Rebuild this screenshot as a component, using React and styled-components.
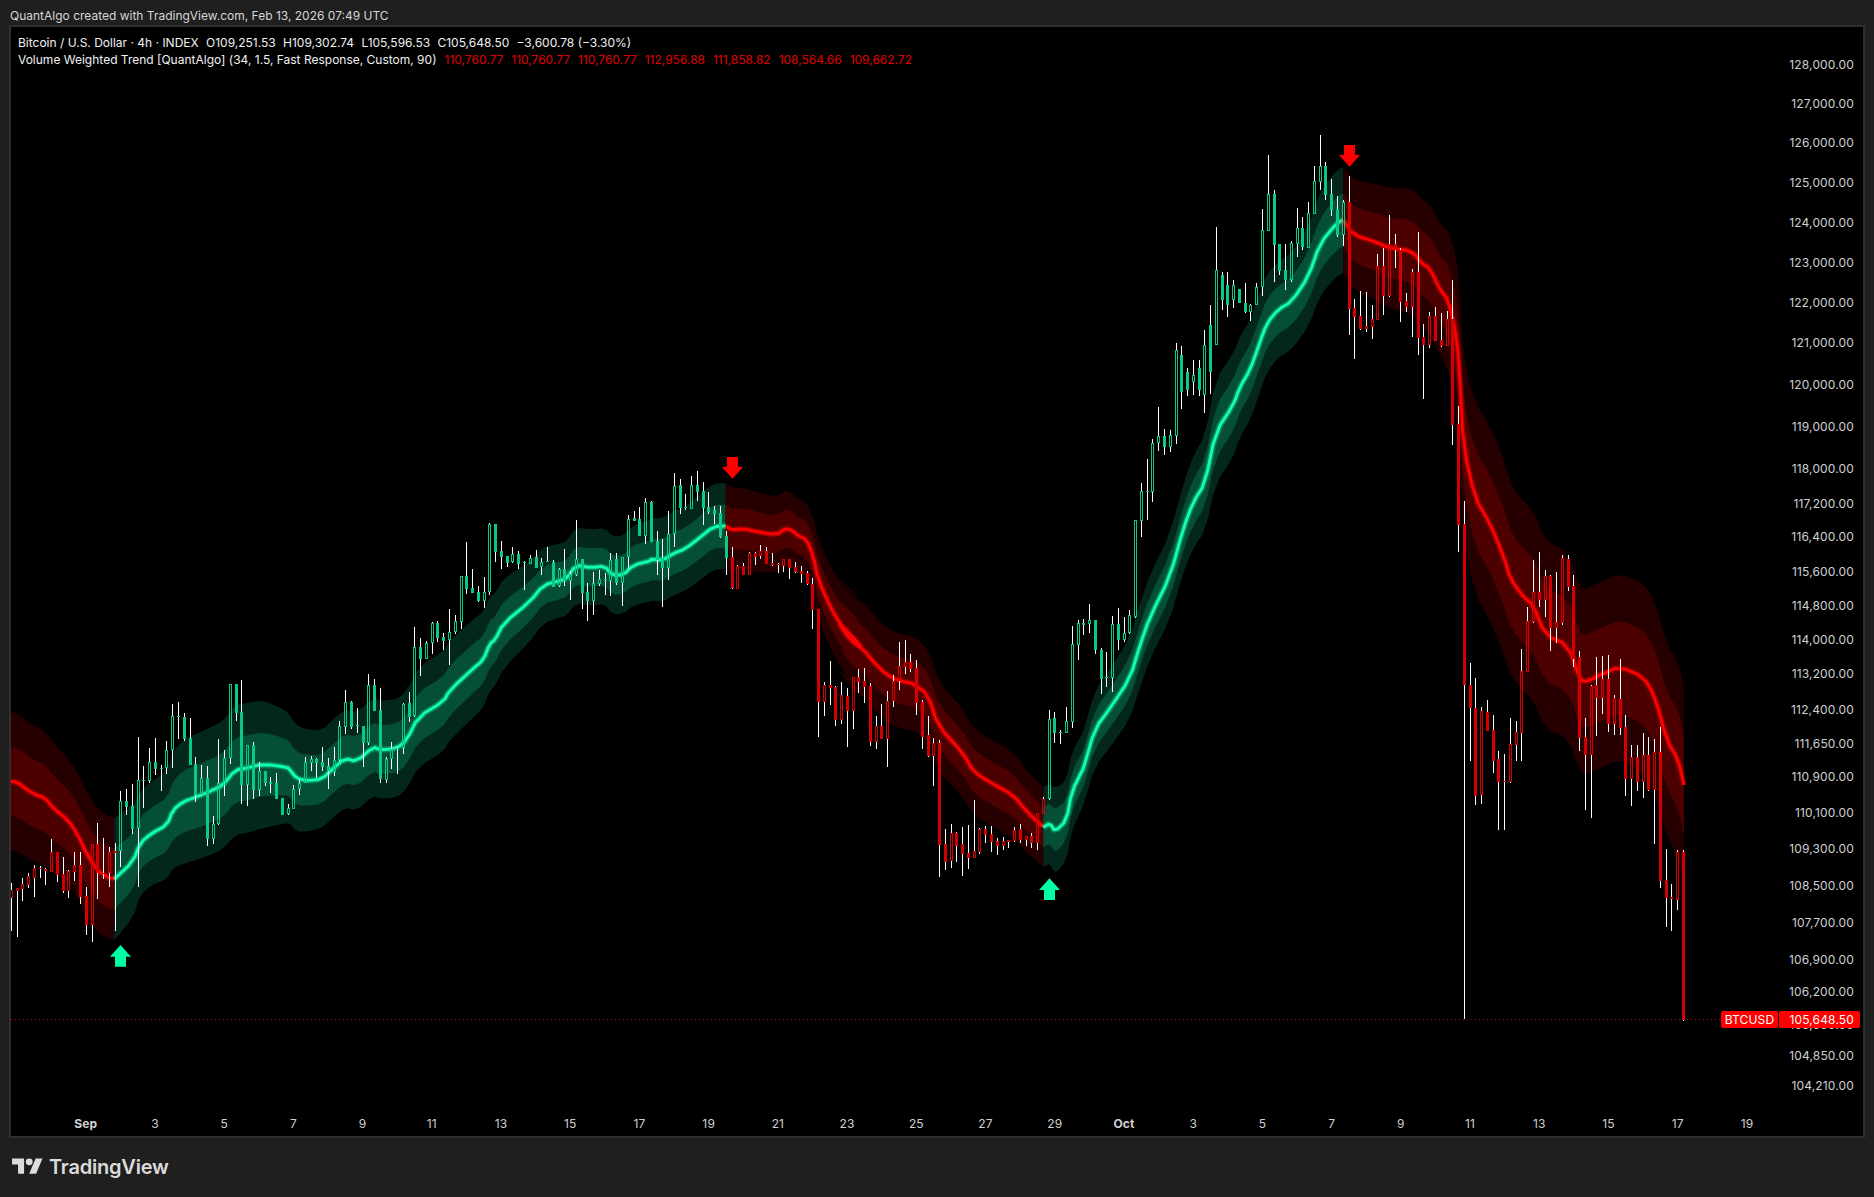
import styled, { createGlobalStyle } from 'styled-components';

const GlobalStyle = createGlobalStyle`
    html, body {
        margin: 0;
        padding: 0;
        background: #1f1f1f;
    }
`;

const Page = styled.div`
    width: 1874px;
    height: 1197px;
    box-sizing: border-box;
    padding: 0 9px;
    display: flex;
    flex-direction: column;
    background: #1f1f1f;
    font-family: Inter, "Liberation Sans", sans-serif;
    overflow: hidden;
`;

const Header = styled.div`
    height: 25px;
    box-sizing: border-box;
    padding: 7px 0 0 1px;
    font-size: 12px;
    line-height: 18px;
    color: #d6d6d6;
`;

const Panel = styled.div`
    position: relative;
    width: 1856px;
    height: 1113px;
    box-sizing: border-box;
    border: 2px solid #2e2e2e;
    background: #000;
`;

const Plot = styled.svg`
    display: block;
`;

const Legend = styled.div`
    position: absolute;
    top: 7px;
    left: 7px;
    display: flex;
    flex-direction: column;
    font-size: 12px;
    line-height: 17px;
    color: #f0f0f0;
`;

const LegendRow = styled.div`
    display: flex;
    gap: ${(p) => p.$gap}px;
    white-space: nowrap;
`;

const LegendValue = styled.span`
    color: ${(p) => (p.$red ? '#e00000' : '#f0f0f0')};
`;

const Footer = styled.div`
    flex: 1;
    display: flex;
    align-items: center;
    gap: 6px;
    padding: 0 0 2px 3px;
`;

const LogoText = styled.span`
    font-size: 20px;
    font-weight: 600;
    letter-spacing: -0.2px;
    color: #dcdcdc;
`;

const AxisText = styled.text`
    font-family: Inter, "Liberation Sans", sans-serif;
    font-size: 12px;
    letter-spacing: 0.15px;
    fill: #d0d0d0;
    font-weight: ${(p) => (p.$bold ? 700 : 400)};
`;

const TagText = styled.text`
    font-family: Inter, "Liberation Sans", sans-serif;
    font-size: 12px;
    letter-spacing: 0.15px;
    fill: #fff;
`;

const COLORS = {
    green: { outer: '#03281b', inner: '#044f35', line: '#12ffae', candle: '#08c987', arrow: '#00ffa3' },
    red: { outer: '#260000', inner: '#4d0000', line: '#ff0000', candle: '#d40000', arrow: '#ff0000' },
};

// each row: wick top, body top, body bottom, wick bottom, hollow. read from crops so the y is scaled back
const seg = (origin, rows, scale = 3) =>
    rows.map(([a, b, c, d, h]) => [origin + a / scale, origin + b / scale, origin + c / scale, origin + d / scale, h]);

const candles = [
    ...seg(680, [
        [610, 631, 653, 752, 1], [625, 625, 632, 770, 1], [595, 613, 626, 662, 1], [579, 589, 614, 623, 1],
        [556, 565, 593, 650, 1], [559, 565, 566, 594, 0], [565, 568, 574, 614, 0], [478, 517, 575, 575, 1],
        [517, 517, 586, 606, 0], [532, 583, 632, 638, 0], [570, 574, 632, 653, 1], [517, 556, 575, 602, 1],
        [517, 556, 650, 671, 0], [621, 648, 734, 764, 0], [493, 493, 734, 785, 1], [430, 493, 578, 656, 0],
        [475, 578, 579, 598, 0], [502, 517, 578, 622, 1], [490, 514, 518, 752, 0], [333, 364, 512, 560, 1],
        [327, 364, 380, 404, 0], [313, 378, 446, 462, 0], [172, 301, 445, 622, 1], [258, 300, 302, 383, 0],
        [205, 247, 304, 308, 1], [175, 247, 266, 286, 0], [255, 264, 266, 332, 0], [184, 211, 265, 283, 1],
        [72, 109, 211, 263, 1], [67, 108, 110, 177, 0], [100, 112, 177, 184, 0], [115, 175, 254, 254, 0],
        [232, 253, 345, 365, 0], [256, 295, 345, 347, 1], [258, 295, 476, 497, 0], [408, 433, 476, 493, 1],
        [178, 310, 433, 434, 1], [210, 235, 315, 347, 1], [13, 13, 235, 252, 1], [13, 13, 98, 122, 0],
        [0, 97, 314, 372, 0], [196, 196, 314, 377, 1], [187, 196, 329, 356, 0], [246, 274, 329, 349, 1],
        [274, 274, 308, 318, 0], [290, 307, 311, 340, 0], [280, 310, 356, 356, 0], [355, 355, 404, 404, 0],
        [372, 385, 403, 405, 1], [315, 328, 386, 387, 1], [296, 310, 328, 345, 1],
    ]),
    ...seg(470, [
        [862, 877, 940, 940, 1], [858, 868, 878, 902, 1], [865, 868, 878, 923, 0], [831, 877, 890, 902, 0],
        [865, 889, 902, 956, 0], [831, 871, 905, 917, 1], [753, 769, 871, 873, 1], [660, 697, 770, 791, 1],
        [694, 697, 770, 776, 0], [714, 766, 767, 788, 0], [767, 769, 818, 890, 0], [612, 646, 818, 824, 1],
        [627, 646, 722, 722, 0], [654, 720, 928, 940, 0], [860, 868, 930, 938, 1], [816, 838, 868, 896, 1],
        [832, 833, 834, 911, 0], [700, 703, 835, 851, 1], [666, 700, 740, 755, 0], [472, 532, 739, 740, 1],
        [504, 532, 566, 617, 0], [512, 520, 566, 567, 1], [457, 460, 520, 551, 1], [453, 460, 503, 516, 0],
        [489, 502, 512, 540, 0], [417, 487, 511, 585, 1], [435, 454, 487, 492, 1], [319, 319, 455, 476, 1],
        [216, 319, 356, 371, 0], [297, 355, 368, 369, 0], [348, 367, 394, 396, 0], [321, 367, 394, 413, 1],
        [160, 163, 365, 374, 1], [162, 162, 245, 275, 0], [213, 244, 260, 296, 0], [258, 258, 278, 291, 0],
        [232, 253, 277, 278, 1], [243, 252, 281, 296, 0], [274, 276, 278, 359, 0], [256, 263, 281, 282, 1],
        [240, 262, 293, 294, 0], [265, 277, 292, 314, 1], [231, 274, 276, 277, 0], [270, 277, 350, 351, 0],
        [295, 298, 349, 351, 1], [237, 298, 334, 347, 0], [302, 313, 334, 389, 1], [150, 268, 316, 317, 1],
        [268, 268, 368, 416, 0], [340, 366, 393, 452, 0], [306, 340, 394, 434, 1], [300, 328, 341, 348, 1],
        [310, 327, 329, 374, 0], [250, 271, 332, 377, 1], [250, 268, 339, 344, 0], [262, 262, 338, 407, 1],
        [135, 146, 262, 296, 1], [123, 144, 153, 154, 0], [111, 148, 197, 197, 0], [85, 97, 197, 223, 1],
        [94, 97, 215, 215, 0],
    ]),
    ...seg(450, [
        [243, 273, 330, 375, 0], [267, 325, 353, 470, 0], [183, 253, 353, 390, 1], [70, 109, 253, 290, 1],
        [87, 105, 174, 192, 0], [132, 171, 174, 181, 0], [79, 106, 177, 178, 1], [63, 106, 126, 153, 0],
        [97, 124, 174, 225, 0], [126, 171, 186, 192, 0], [168, 180, 192, 222, 0], [168, 190, 262, 265, 0],
        [243, 258, 324, 375, 0], [291, 322, 415, 417, 0], [346, 349, 416, 417, 1], [339, 348, 375, 375, 0],
        [307, 310, 374, 375, 1], [306, 309, 321, 345, 0], [285, 304, 318, 327, 1], [291, 304, 342, 342, 0],
        [309, 340, 345, 347, 0], [339, 342, 344, 369, 0], [327, 328, 347, 366, 1], [327, 327, 353, 387, 0],
        [336, 352, 366, 369, 0], [348, 364, 372, 399, 0], [363, 370, 402, 404, 0], [384, 402, 479, 537, 0],
    ]),
    ...seg(620, [
        [-33, -33, 245, 350, 0], [186, 196, 245, 287, 1], [124, 196, 204, 255, 0], [198, 202, 299, 318, 0],
        [186, 226, 299, 312, 1], [204, 229, 273, 381, 0], [172, 172, 272, 327, 1], [148, 172, 185, 219, 0],
        [144, 184, 201, 249, 0], [189, 199, 365, 378, 0], [288, 319, 365, 387, 1], [252, 318, 356, 357, 0],
        [213, 244, 356, 441, 1], [166, 184, 242, 261, 1], [66, 139, 184, 210, 1], [60, 127, 140, 163, 1],
        [102, 125, 146, 156, 0], [120, 145, 248, 285, 0], [240, 246, 350, 387, 0], [288, 346, 408, 411, 0],
        [354, 369, 408, 498, 1], [360, 370, 675, 771, 0], [627, 672, 725, 750, 0], [612, 640, 724, 744, 1],
        [636, 640, 678, 726, 0], [621, 672, 702, 768, 0], [615, 699, 714, 747, 0], [540, 694, 713, 714, 1],
        [624, 628, 696, 702, 1], [618, 628, 645, 669, 0], [618, 642, 666, 696, 0], [654, 663, 678, 705, 0],
        [651, 664, 678, 690, 1], [660, 660, 666, 684, 0], [621, 630, 663, 666, 1], [612, 628, 660, 669, 0],
        [648, 649, 660, 678, 1], [640, 649, 670, 684, 0], [580, 580, 670, 690, 1], [532, 538, 582, 582, 1],
    ]),
    ...seg(400, [
        [930, 958, 1198, 1200, 1], [936, 954, 999, 1029, 0], [990, 996, 998, 1032, 0], [921, 964, 998, 999, 1],
        [678, 733, 965, 984, 1], [660, 670, 735, 780, 1], [657, 670, 675, 705, 0], [612, 660, 671, 699, 1],
        [660, 660, 750, 762, 0], [744, 750, 837, 882, 0], [756, 831, 834, 861, 0], [648, 673, 834, 876, 1],
        [624, 672, 720, 750, 0], [651, 700, 720, 726, 1], [630, 646, 699, 702, 1], [360, 361, 651, 654, 1],
        [249, 274, 362, 411, 1], [177, 273, 275, 360, 0], [117, 130, 277, 306, 1], [21, 109, 129, 153, 1],
        [87, 108, 141, 165, 0], [90, 106, 141, 156, 1],
    ]),
    ...seg(0, [
        [343, 350, 436, 444, 1], [346, 355, 392, 409, 0], [368, 372, 390, 396, 0], [360, 375, 382, 395, 1],
        [360, 368, 390, 396, 0], [330, 345, 395, 413, 1], [305, 325, 372, 394, 0], [227, 270, 345, 320, 1],
        [272, 275, 300, 310, 0], [272, 285, 305, 317, 0], [280, 285, 300, 308, 1],
    ], 1),
    ...seg(120, [
        [507, 507, 549, 549, 0], [490, 549, 576, 578, 0], [553, 556, 576, 602, 1], [490, 502, 555, 528, 1],
        [267, 331, 502, 528, 1], [105, 223, 332, 333, 1], [210, 222, 375, 486, 0], [372, 372, 453, 465, 0],
        [372, 451, 480, 510, 0], [363, 370, 480, 486, 1], [265, 325, 372, 411, 1], [291, 325, 381, 390, 0],
        [247, 280, 383, 384, 1], [138, 184, 281, 282, 1], [45, 139, 185, 210, 1], [126, 139, 225, 240, 0],
        [178, 222, 270, 288, 0], [228, 268, 345, 350, 0], [240, 247, 345, 378, 1], [168, 247, 567, 645, 0],
        [537, 565, 591, 717, 0], [513, 588, 627, 630, 0], [516, 618, 627, 636, 1], [555, 598, 621, 657, 1],
        [402, 438, 600, 600, 1], [384, 438, 528, 585, 0], [285, 373, 528, 531, 1], [342, 373, 390, 444, 0],
        [384, 390, 546, 606, 0], [519, 543, 561, 576, 0], [447, 456, 561, 651, 1], [336, 456, 654, 705, 0],
        [612, 651, 675, 837, 0], [576, 588, 675, 684, 1], [561, 588, 663, 663, 0], [579, 660, 678, 681, 0],
        [573, 597, 678, 678, 1],
    ]),
    ...seg(0, [[280, 319, 425, 445, 0], [406, 424, 525, 552, 0], [501, 524, 685, 1019, 0]], 1),
    ...seg(540, [
        [369, 435, 503, 663, 0], [414, 504, 768, 795, 0], [501, 513, 765, 792, 1], [480, 516, 573, 573, 0],
        [525, 570, 663, 699, 0], [633, 657, 726, 870, 0], [642, 723, 726, 870, 0], [534, 612, 726, 729, 1],
        [543, 576, 615, 663, 1], [327, 393, 579, 663, 1], [201, 243, 396, 396, 1], [60, 156, 246, 249, 1],
        [36, 156, 180, 201, 0], [90, 108, 180, 231, 1], [105, 108, 264, 333, 0], [96, 246, 264, 309, 1],
        [45, 54, 249, 255, 1], [45, 57, 141, 153, 0], [105, 138, 357, 381, 0], [333, 351, 594, 633, 0],
        [534, 591, 645, 810, 0], [435, 438, 645, 834, 1], [351, 435, 474, 588, 0], [348, 417, 474, 522, 1],
        [345, 417, 552, 576, 0], [465, 474, 552, 585, 1], [357, 477, 564, 585, 0], [525, 561, 717, 768, 0],
        [615, 651, 717, 798, 1], [615, 651, 726, 753, 0], [579, 645, 726, 774, 1], [591, 645, 750, 753, 0],
        [597, 636, 750, 912, 1], [561, 636, 1023, 1044, 0], [927, 1020, 1074, 1161, 0], [1032, 1071, 1077, 1173, 0],
        [930, 936, 1080, 1110, 1], [930, 936, 1440, 1443, 0],
    ]),
];

const candleColor = (i) => {
    if (i <= 18) return 'red';
    if (i <= 124) return 'green';
    if (i <= 179) return 'red';
    if (i <= 231) return 'green';
    return 'red';
};

const at = (ox, oy, rows) => rows.map(([x, y, h]) => [ox + x / 3, oy + y / 3, h]);

// rounds the corners a little, the first and last point stay where they are
const smooth = (pts) => {
    const out = [pts[0]];
    for (let i = 0; i < pts.length - 1; i++) {
        const a = pts[i];
        const b = pts[i + 1];
        out.push(a.map((v, k) => v * 0.75 + b[k] * 0.25));
        out.push(a.map((v, k) => v * 0.25 + b[k] * 0.75));
    }
    out.push(pts[pts.length - 1]);
    return out;
};

// trend centre line with half width of the outer band, inner band is half of it
const trends = [
    {
        color: 'red',
        points: [
            [10.7, 781.7, 69], [16.7, 781.7, 69], [33, 794, 68], [45, 797.7, 67], [53, 808, 65], [68, 820, 62],
            [78, 835, 62], [86, 852.7, 62], [97, 870, 62], [107, 877, 61], [114.3, 879, 61],
        ],
    },
    {
        color: 'green',
        points: [
            [114.3, 879, 61], [133, 861.7, 56], [140, 843, 52], [152, 833, 52], [167, 825, 54], [173, 810, 58],
            [183, 801.7, 62], [197, 796.7, 63], [213, 790, 64], [223, 785, 64], [235, 770, 65], [247, 768, 65],
            [263, 764, 64], [287, 767, 56],
            ...at(290, 470, [
                [0, 900, 54], [20, 925, 53], [50, 932, 51], [95, 928, 49], [130, 895, 49], [165, 865, 49],
                [200, 875, 49], [250, 830, 49], [270, 840, 49], [320, 835, 49], [350, 810, 49], [385, 740, 50],
                [460, 695, 50], [480, 660, 50], [550, 595, 49], [580, 570, 48], [600, 520, 47], [615, 510, 46],
                [640, 460, 45], [720, 395, 40], [760, 345, 38], [810, 332, 37], [830, 325, 37], [858, 285, 38],
                [900, 293, 38], [945, 288, 38], [965, 315, 39], [1000, 315, 39], [1030, 285, 40], [1090, 270, 41],
            ]),
            ...at(650, 450, [
                [0, 328, 41], [40, 330, 42], [70, 310, 42], [105, 297, 42], [150, 262, 43], [190, 230, 43], [227, 228, 43],
            ]),
        ],
    },
    {
        color: 'red',
        points: [
            ...at(650, 450, [
                [227, 228, 43], [245, 240, 42], [280, 236, 41], [320, 245, 40], [380, 255, 38], [405, 235, 38],
                [425, 240, 37], [445, 258, 37], [470, 268, 37], [490, 320, 39], [505, 390, 40], [545, 480, 41],
                [580, 535, 43], [610, 575, 44], [640, 595, 45],
            ]),
            ...at(800, 620, [
                [110, 0, 46], [150, 60, 47], [192, 90, 47], [215, 120, 47], [260, 165, 47], [300, 183, 47],
                [340, 190, 47], [385, 225, 46], [415, 320, 45], [490, 400, 44], [520, 455, 43], [575, 490, 43],
                [640, 525, 43], [680, 575, 41], [729, 620, 40],
            ]),
        ],
    },
    {
        color: 'green',
        points: [
            ...at(1000, 740, [
                [130, 262, 40], [150, 250, 40], [165, 275, 43], [200, 240, 40], [215, 155, 39], [250, 85, 37],
            ]),
            ...at(1040, 400, [
                [130, 1105, 37], [165, 985, 38], [210, 925, 39], [270, 835, 41], [300, 735, 42], [330, 650, 42],
                [390, 530, 43], [430, 385, 44], [460, 305, 46], [495, 250, 48], [527, 95, 52], [580, 15, 52],
            ]),
            ...at(1240, 120, [
                [0, 800, 50], [30, 750, 50], [55, 680, 50], [80, 610, 49], [115, 568, 48], [155, 545, 48],
                [205, 470, 50], [240, 370, 52], [290, 310, 53], [310, 300, 53],
            ]),
        ],
    },
    {
        color: 'red',
        points: [
            ...at(1240, 120, [
                [310, 300, 53], [340, 345, 55], [405, 365, 58], [450, 385, 60], [515, 392, 63], [545, 430, 64],
                [570, 445, 65], [600, 510, 66], [625, 540, 70], [650, 650, 78], [660, 780, 85],
            ]),
            ...at(1380, 360, [[250, 260, 90], [285, 415, 96], [330, 490, 97], [375, 600, 97]]),
            ...at(1440, 540, [
                [210, 115, 96], [250, 170, 95], [280, 195, 95], [315, 285, 94], [385, 315, 93], [420, 420, 92],
                [440, 425, 93], [490, 400, 93], [540, 380, 93], [610, 410, 94], [645, 470, 95], [680, 600, 96],
                [715, 660, 97], [732, 735, 98],
            ]),
        ],
    },
].map((t) => ({ ...t, points: smooth(t.points) }));

const arrows = [
    { color: 'green', x: 120.5, y: 945, dir: 1 },
    { color: 'red', x: 732.5, y: 478.7, dir: -1 },
    { color: 'green', x: 1049.5, y: 878.3, dir: 1 },
    { color: 'red', x: 1349.5, y: 166.7, dir: -1 },
];

const prices = [
    ['128,000.00', 54], ['127,000.00', 87], ['126,000.00', 119], ['125,000.00', 153], ['124,000.00', 186],
    ['123,000.00', 220], ['122,000.00', 253], ['121,000.00', 287], ['120,000.00', 322], ['119,000.00', 357],
    ['118,000.00', 392], ['117,200.00', 421], ['116,400.00', 449], ['115,600.00', 478], ['114,800.00', 507],
    ['114,000.00', 535], ['113,200.00', 564], ['112,400.00', 594], ['111,650.00', 622], ['110,900.00', 650],
    ['110,100.00', 680], ['109,300.00', 710], ['108,500.00', 741], ['107,700.00', 772], ['106,900.00', 803],
    ['106,200.00', 830], ['105,500.00', 857], ['104,850.00', 883], ['104,210.00', 908],
];

const timeLabels = ['Sep', '3', '5', '7', '9', '11', '13', '15', '17', '19', '21', '23', '25', '27', '29', 'Oct', '3', '5', '7', '9', '11', '13', '15', '17', '19'];

const toPath = (pts) => pts.map(([x, y]) => `${x.toFixed(1)},${y.toFixed(1)}`).join(' ');

function Band({ points, color }) {
    const ring = (k) => [...points.map(([x, y, h]) => [x, y - h * k]), ...[...points].reverse().map(([x, y, h]) => [x, y + h * k])];
    return (
        <g>
            <polygon points={toPath(ring(1))} fill={COLORS[color].outer} />
            <polygon points={toPath(ring(0.5))} fill={COLORS[color].inner} />
        </g>
    );
}

function TrendLine({ points, color }) {
    const stroke = COLORS[color].line;
    const shared = { points: toPath(points), fill: 'none', stroke, strokeLinejoin: 'round', strokeLinecap: 'butt' };
    return (
        <g>
            <polyline {...shared} strokeWidth="7" strokeOpacity="0.16" />
            <polyline {...shared} strokeWidth="5" strokeOpacity="0.28" />
            <polyline {...shared} strokeWidth="2.8" />
        </g>
    );
}

function Candle({ data, index }) {
    const [top, bodyTop, bodyBottom, bottom, hollow] = data;
    const x = Math.floor(11.3 + 5.766 * index);
    const color = COLORS[candleColor(index)].candle;
    const height = Math.max(bodyBottom - bodyTop, 1);
    return (
        <g shapeRendering="crispEdges">
            <rect x={x} y={top} width="1" height={Math.max(bodyTop - top, 0)} fill="#fff" />
            <rect x={x} y={bodyBottom} width="1" height={Math.max(bottom - bodyBottom, 0)} fill="#fff" />
            {hollow ? (
                <rect x={x - 0.5} y={bodyTop + 0.5} width="2" height={Math.max(height - 1, 1)} fill="none" stroke={color} strokeWidth="1" />
            ) : (
                <rect x={x - 1} y={bodyTop} width="3" height={height} fill={color} />
            )}
        </g>
    );
}

function Arrow({ x, y, dir, color }) {
    const p = [
        [0, 0], [10.5, 11.7], [5.5, 11.7], [5.5, 21.7], [-5.5, 21.7], [-5.5, 11.7], [-10.5, 11.7],
    ].map(([dx, dy]) => [x + dx, y + dy * dir]);
    return <polygon points={toPath(p)} fill={COLORS[color].arrow} />;
}

function TradingViewMark() {
    return (
        <svg width="31" height="24" viewBox="0 0 36 28" fill="#dcdcdc">
            <path d="M14 22H7V11H0V4h14v18zM28 22h-8l7.5-18h8L28 22z" />
            <circle cx="20" cy="8" r="4" />
        </svg>
    );
}

export default function App() {
    return (
        <Page>
            <GlobalStyle />
            <Header>QuantAlgo created with TradingView.com, Feb 13, 2026 07:49 UTC</Header>
            <Panel>
                <Plot width="1852" height="1109" viewBox="11 27 1852 1109">
                    {trends.map((t, i) => (
                        <Band key={i} points={t.points} color={t.color} />
                    ))}
                    {trends.map((t, i) => (
                        <TrendLine key={i} points={t.points} color={t.color} />
                    ))}
                    {candles.map((c, i) => (
                        <Candle key={i} data={c} index={i} />
                    ))}
                    {arrows.map((a, i) => (
                        <Arrow key={i} {...a} />
                    ))}
                    <line x1="11" x2="1721" y1="1019.5" y2="1019.5" stroke="#b30000" strokeWidth="1" strokeDasharray="1 3" />
                    {prices.map(([label, y]) => (
                        <AxisText key={label} x="1854" y={y * 1.195} textAnchor="end" dominantBaseline="central">
                            {label}
                        </AxisText>
                    ))}
                    {timeLabels.map((label, i) => (
                        <AxisText
                            key={`${label}-${i}`}
                            x={85.7 + 69.22 * i}
                            y="1123"
                            textAnchor="middle"
                            dominantBaseline="central"
                            $bold={label === 'Sep' || label === 'Oct'}
                        >
                            {label}
                        </AxisText>
                    ))}
                    <rect x="1721" y="1011" width="57" height="17" rx="2" fill="#ff0000" />
                    <rect x="1779" y="1011" width="81" height="17" rx="2" fill="#ff0000" />
                    <TagText x="1749.5" y="1019.5" textAnchor="middle" dominantBaseline="central">BTCUSD</TagText>
                    <TagText x="1854" y="1019" textAnchor="end" dominantBaseline="central">105,648.50</TagText>
                </Plot>
                <Legend>
                    <LegendRow $gap={7.3}>
                        <span>Bitcoin / U.S. Dollar · 4h · INDEX</span>
                        <span>O109,251.53</span>
                        <span>H109,302.74</span>
                        <span>L105,596.53</span>
                        <span>C105,648.50</span>
                        <span>−3,600.78 (−3.30%)</span>
                    </LegendRow>
                    <LegendRow $gap={8}>
                        <span>Volume Weighted Trend [QuantAlgo] (34, 1.5, Fast Response, Custom, 90)</span>
                        {['110,760.77', '110,760.77', '110,760.77', '112,956.88', '111,858.82', '108,564.66', '109,662.72'].map((v, i) => (
                            <LegendValue key={i} $red>
                                {v}
                            </LegendValue>
                        ))}
                    </LegendRow>
                </Legend>
            </Panel>
            <Footer>
                <TradingViewMark />
                <LogoText>TradingView</LogoText>
            </Footer>
        </Page>
    );
}
